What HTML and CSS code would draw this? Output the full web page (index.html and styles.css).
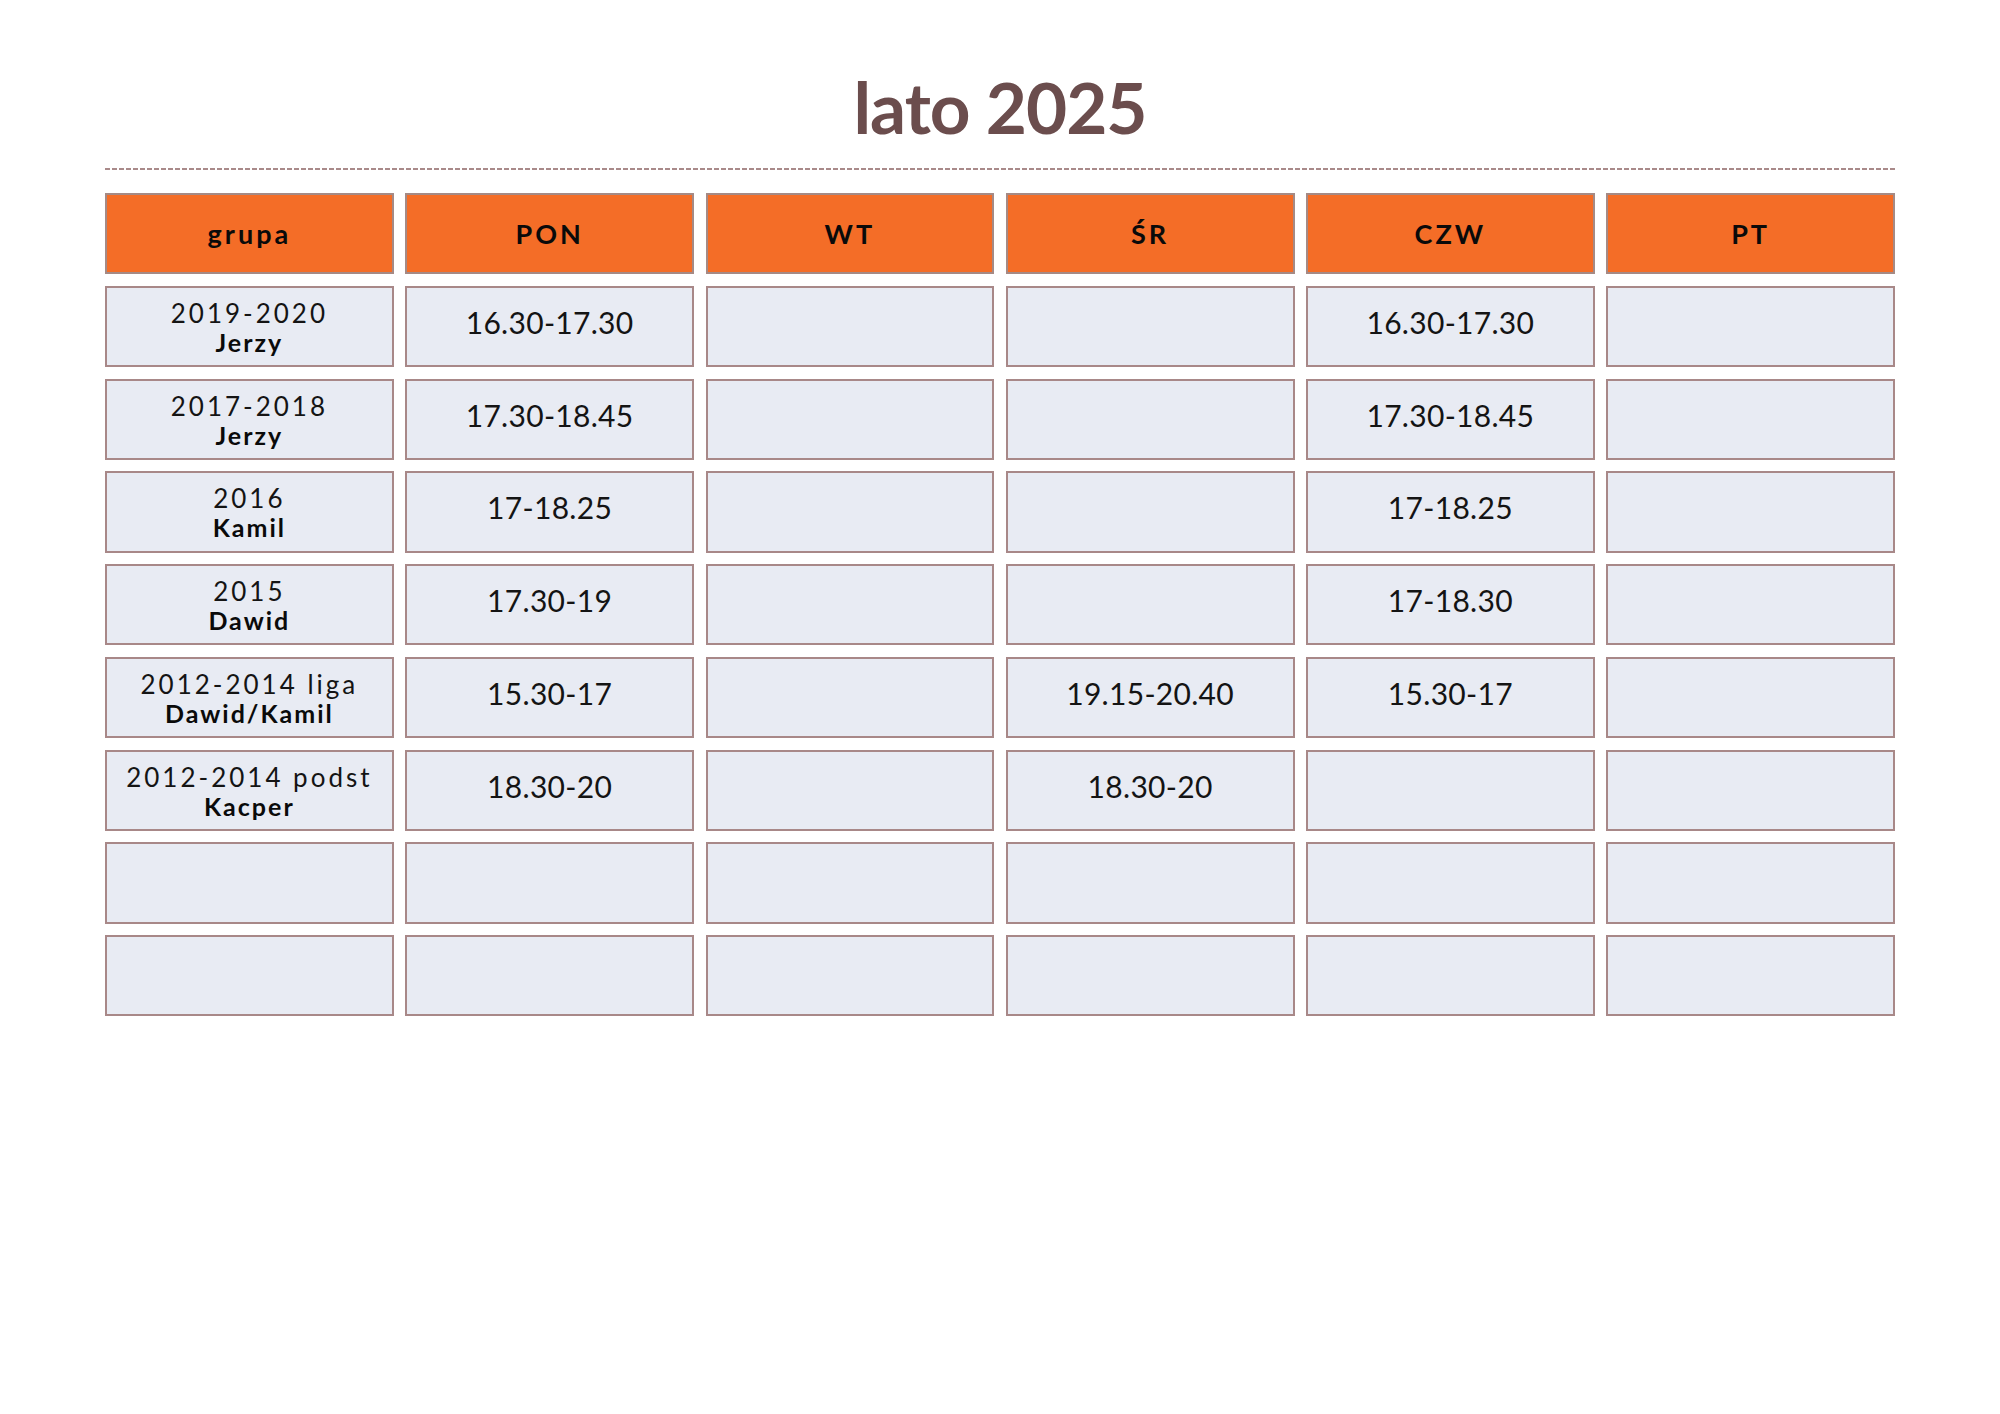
FILE: index.html
```html
<!DOCTYPE html>
<html lang="pl">
<head>
<meta charset="utf-8">
<title>lato 2025</title>
<link rel="stylesheet" href="styles.css">
</head>
<body>
<div class="page">
  <h1 class="title">lato 2025</h1>
  <div class="rule"></div>
  <div class="grid">
    <div class="cell head">grupa</div>
    <div class="cell head">PON</div>
    <div class="cell head">WT</div>
    <div class="cell head">ŚR</div>
    <div class="cell head">CZW</div>
    <div class="cell head">PT</div>

    <div class="cell group"><span class="year">2019-2020</span><span class="coach">Jerzy</span></div>
    <div class="cell time">16.30-17.30</div>
    <div class="cell time"></div>
    <div class="cell time"></div>
    <div class="cell time">16.30-17.30</div>
    <div class="cell time"></div>

    <div class="cell group"><span class="year">2017-2018</span><span class="coach">Jerzy</span></div>
    <div class="cell time">17.30-18.45</div>
    <div class="cell time"></div>
    <div class="cell time"></div>
    <div class="cell time">17.30-18.45</div>
    <div class="cell time"></div>

    <div class="cell group"><span class="year">2016</span><span class="coach">Kamil</span></div>
    <div class="cell time">17-18.25</div>
    <div class="cell time"></div>
    <div class="cell time"></div>
    <div class="cell time">17-18.25</div>
    <div class="cell time"></div>

    <div class="cell group"><span class="year">2015</span><span class="coach">Dawid</span></div>
    <div class="cell time">17.30-19</div>
    <div class="cell time"></div>
    <div class="cell time"></div>
    <div class="cell time">17-18.30</div>
    <div class="cell time"></div>

    <div class="cell group"><span class="year">2012-2014 liga</span><span class="coach">Dawid/Kamil</span></div>
    <div class="cell time">15.30-17</div>
    <div class="cell time"></div>
    <div class="cell time">19.15-20.40</div>
    <div class="cell time">15.30-17</div>
    <div class="cell time"></div>

    <div class="cell group"><span class="year">2012-2014 podst</span><span class="coach">Kacper</span></div>
    <div class="cell time">18.30-20</div>
    <div class="cell time"></div>
    <div class="cell time">18.30-20</div>
    <div class="cell time"></div>
    <div class="cell time"></div>

    <div class="cell time"></div>
    <div class="cell time"></div>
    <div class="cell time"></div>
    <div class="cell time"></div>
    <div class="cell time"></div>
    <div class="cell time"></div>

    <div class="cell time"></div>
    <div class="cell time"></div>
    <div class="cell time"></div>
    <div class="cell time"></div>
    <div class="cell time"></div>
    <div class="cell time"></div>
  </div>
</div>
</body>
</html>
```

FILE: styles.css
```css
html, body {
  margin: 0;
  padding: 0;
  background: #ffffff;
}

body {
  font-family: "Lato", "Liberation Sans", sans-serif;
  color: #111111;
}

.page {
  width: 2000px;
  height: 1414px;
  box-sizing: border-box;
  padding: 60px 105px 0 105px;
}

.title {
  margin: 0;
  height: 93px;
  text-align: center;
  font-family: "Lato", "Liberation Sans", sans-serif;
  font-weight: 700;
  font-size: 71px;
  line-height: 93px;
  letter-spacing: -1px;
  color: #6b4d4d;
}

.rule {
  height: 2px;
  margin-top: 15px;
  background-image: repeating-linear-gradient(to right, #a98a8a 0, #a98a8a 5px, transparent 5px, transparent 7px);
}

.grid {
  margin-top: 23px;
  display: grid;
  grid-template-columns: repeat(6, 1fr);
  grid-auto-rows: 81.2px;
  column-gap: 11.5px;
  row-gap: 11.6px;
}

.cell {
  box-sizing: border-box;
  border: 2px solid #a88888;
  background: #e8ebf3;
  display: flex;
  flex-direction: column;
  align-items: center;
  justify-content: center;
  text-align: center;
}

.head {
  background: #f46d27;
  border-color: #a58a85;
  font-weight: 700;
  font-size: 27px;
  letter-spacing: 3px;
  color: #0a0a0a;
}

.time {
  font-size: 30px;
  font-weight: 400;
  letter-spacing: 0.3px;
  color: #141414;
  padding-bottom: 9px;
}

.group {
  justify-content: flex-start;
  padding-top: 11px;
  line-height: 29px;
}

.year {
  font-size: 26px;
  font-weight: 400;
  letter-spacing: 3px;
  color: #141414;
}

.coach {
  font-size: 25px;
  font-weight: 700;
  letter-spacing: 2px;
  color: #0a0a0a;
}
```
